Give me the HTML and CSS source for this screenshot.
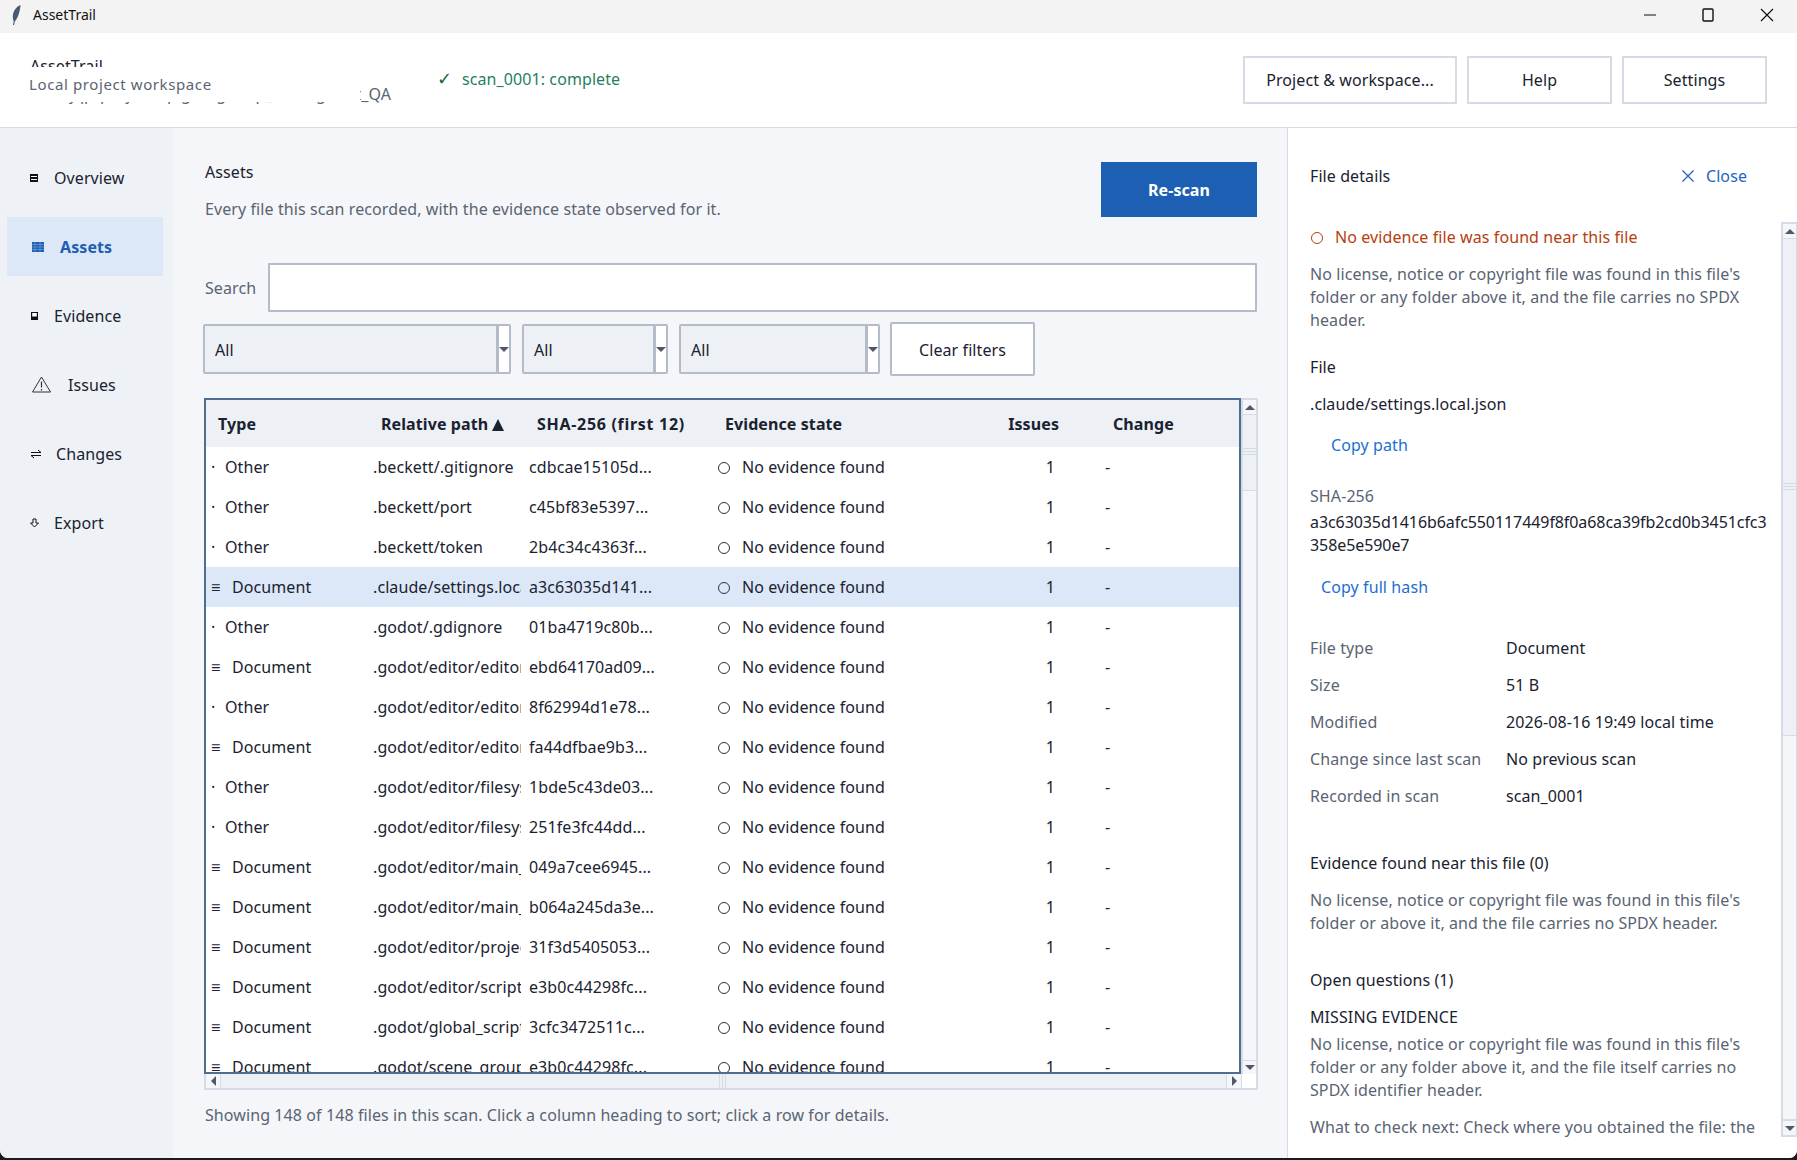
FILE: index.html
```html
<!DOCTYPE html>
<html lang="en">
<head>
    <meta charset="UTF-8">
    <meta name="viewport" content="width=device-width, initial-scale=1.0">
    <title>AssetTrail</title>
    <link rel="stylesheet" href="styles.css">
</head>
<body>
<div class="app">
    <!-- Title bar -->
    <div class="titlebar">
        <svg class="feather" width="14" height="22" viewBox="0 0 14 24"><path d="M12 1C7 3 3.500 8 3.500 14c0 2 .5 3.500 1 5l-.8 4h1.200l.8-4c3-3 5.500-10 6.300-18z" fill="#4a5a6e"/></svg>
        <span class="titlebar_name">AssetTrail</span>
        <div class="win_controls">
            <svg width="12" height="12" viewBox="0 0 12 12"><path d="M0 6h12" stroke="#111" stroke-width="1"/></svg>
            <svg width="12" height="14" viewBox="0 0 12 14"><rect x="1" y="1" width="10" height="12" rx="1" fill="none" stroke="#111" stroke-width="1.400"/></svg>
            <svg width="14" height="14" viewBox="0 0 14 14"><path d="M1 1l12 12M13 1L1 13" stroke="#111" stroke-width="1.200"/></svg>
        </div>
    </div>

    <!-- Header -->
    <header class="topbar">
        <div class="brand">
            <div class="brand_name">AssetTrail</div>
            <div class="brand_path">C:/Users/jqp/projects/pig/engine/p_tools/godot_QA</div>
            <div class="brand_cover">Local project workspace</div>
        </div>
        <div class="scan_status"><span class="scan_check">✓</span>scan_0001: complete</div>
        <div class="top_buttons">
            <button class="top_btn btn_project">Project &amp; workspace...</button>
            <button class="top_btn btn_small">Help</button>
            <button class="top_btn btn_small">Settings</button>
        </div>
    </header>

    <div class="columns">
        <!-- Sidebar -->
        <nav class="sidebar">
            <a class="nav_item">
                <svg class="nav_icon icon_overview" width="8" height="8" viewBox="0 0 8 8"><rect width="8" height="8" fill="#111"/><path d="M1 2.500h6M1 5.500h6" stroke="#fff" stroke-width="1"/></svg>
                Overview
            </a>
            <a class="nav_item active">
                <svg class="nav_icon icon_assets" width="12" height="10" viewBox="0 0 12 10"><rect width="12" height="10" fill="#1c5fb3"/><path d="M3 0v10M8 0v10M0 2.500h12M0 5h12M0 7.500h12" stroke="#7ea6dc" stroke-width=".6"/></svg>
                Assets
            </a>
            <a class="nav_item">
                <svg class="nav_icon icon_evidence" width="7" height="8" viewBox="0 0 7 8"><rect width="7" height="8" fill="#111"/><rect x="1.200" y="1" width="4.600" height="3.500" fill="#fff"/></svg>
                Evidence
            </a>
            <a class="nav_item">
                <svg class="nav_icon icon_issues" width="19" height="17" viewBox="0 0 19 17"><path d="M9.500 1L18.500 16H.5z" fill="none" stroke="#333" stroke-width="1"/><path d="M9.500 5.500v6M9.500 13v1.500" stroke="#333" stroke-width="1.200"/></svg>
                Issues
            </a>
            <a class="nav_item">
                <svg class="nav_icon icon_changes" width="12" height="10" viewBox="0 0 12 10"><path d="M1 3.500h10L8 1M11 6.500H1L4 9" fill="none" stroke="#111" stroke-width="1"/></svg>
                Changes
            </a>
            <a class="nav_item">
                <svg class="nav_icon icon_export" width="9" height="10" viewBox="0 0 9 10"><path d="M3 1h3v4h2.500L4.500 9 .5 5H3z" fill="none" stroke="#111" stroke-width="1"/></svg>
                Export
            </a>
        </nav>

        <!-- Main -->
        <main class="main">
            <div class="page_head">
                <div>
                    <div class="page_title">Assets</div>
                    <div class="page_sub">Every file this scan recorded, with the evidence state observed for it.</div>
                </div>
                <button class="rescan">Re-scan</button>
            </div>

            <div class="search_row">
                <label class="search_label">Search</label>
                <input class="search_input" type="text">
            </div>

            <div class="filter_row">
                <div class="combo combo_type"><span class="combo_value">All</span><span class="combo_arrow"><i class="tri_down"></i></span></div>
                <div class="combo combo_state"><span class="combo_value">All</span><span class="combo_arrow"><i class="tri_down"></i></span></div>
                <div class="combo combo_change"><span class="combo_value">All</span><span class="combo_arrow"><i class="tri_down"></i></span></div>
                <button class="clear_btn">Clear filters</button>
            </div>

            <div class="table_box">
                <div class="table_frame">
                    <table class="assets">
                        <colgroup>
                            <col class="col_type"><col class="col_path"><col class="col_hash"><col class="col_state"><col class="col_issues"><col class="col_change">
                        </colgroup>
                        <thead>
                            <tr><th class="th_type">Type</th><th class="th_path">Relative path<i class="sort_tri"></i></th><th class="th_hash">SHA-256 (first 12)</th><th class="th_state">Evidence state</th><th class="num">Issues</th><th>Change</th></tr>
                        </thead>
                        <tbody>
                            <tr><td><span class="kind">·</span>Other</td><td>.beckett/.gitignore</td><td>cdbcae15105d...</td><td><i class="dot"></i>No evidence found</td><td class="num">1</td><td>-</td></tr>
                            <tr><td><span class="kind">·</span>Other</td><td>.beckett/port</td><td>c45bf83e5397...</td><td><i class="dot"></i>No evidence found</td><td class="num">1</td><td>-</td></tr>
                            <tr><td><span class="kind">·</span>Other</td><td>.beckett/token</td><td>2b4c34c4363f...</td><td><i class="dot"></i>No evidence found</td><td class="num">1</td><td>-</td></tr>
                            <tr class="selected"><td><span class="kind doc">≡</span>Document</td><td>.claude/settings.local.json</td><td>a3c63035d141...</td><td><i class="dot"></i>No evidence found</td><td class="num">1</td><td>-</td></tr>
                            <tr><td><span class="kind">·</span>Other</td><td>.godot/.gdignore</td><td>01ba4719c80b...</td><td><i class="dot"></i>No evidence found</td><td class="num">1</td><td>-</td></tr>
                            <tr><td><span class="kind doc">≡</span>Document</td><td>.godot/editor/editor_layout.cfg</td><td>ebd64170ad09...</td><td><i class="dot"></i>No evidence found</td><td class="num">1</td><td>-</td></tr>
                            <tr><td><span class="kind">·</span>Other</td><td>.godot/editor/editor_doc_cache</td><td>8f62994d1e78...</td><td><i class="dot"></i>No evidence found</td><td class="num">1</td><td>-</td></tr>
                            <tr><td><span class="kind doc">≡</span>Document</td><td>.godot/editor/editor_state.cfg</td><td>fa44dfbae9b3...</td><td><i class="dot"></i>No evidence found</td><td class="num">1</td><td>-</td></tr>
                            <tr><td><span class="kind">·</span>Other</td><td>.godot/editor/filesystem_cache</td><td>1bde5c43de03...</td><td><i class="dot"></i>No evidence found</td><td class="num">1</td><td>-</td></tr>
                            <tr><td><span class="kind">·</span>Other</td><td>.godot/editor/filesystem_update</td><td>251fe3fc44dd...</td><td><i class="dot"></i>No evidence found</td><td class="num">1</td><td>-</td></tr>
                            <tr><td><span class="kind doc">≡</span>Document</td><td>.godot/editor/main_scene.cfg</td><td>049a7cee6945...</td><td><i class="dot"></i>No evidence found</td><td class="num">1</td><td>-</td></tr>
                            <tr><td><span class="kind doc">≡</span>Document</td><td>.godot/editor/main_script.cfg</td><td>b064a245da3e...</td><td><i class="dot"></i>No evidence found</td><td class="num">1</td><td>-</td></tr>
                            <tr><td><span class="kind doc">≡</span>Document</td><td>.godot/editor/project_metadata.cfg</td><td>31f3d5405053...</td><td><i class="dot"></i>No evidence found</td><td class="num">1</td><td>-</td></tr>
                            <tr><td><span class="kind doc">≡</span>Document</td><td>.godot/editor/script_editor_cache.cfg</td><td>e3b0c44298fc...</td><td><i class="dot"></i>No evidence found</td><td class="num">1</td><td>-</td></tr>
                            <tr><td><span class="kind doc">≡</span>Document</td><td>.godot/global_script_class_cache.cfg</td><td>3cfc3472511c...</td><td><i class="dot"></i>No evidence found</td><td class="num">1</td><td>-</td></tr>
                            <tr><td><span class="kind doc">≡</span>Document</td><td>.godot/scene_groups_cache.cfg</td><td>e3b0c44298fc...</td><td><i class="dot"></i>No evidence found</td><td class="num">1</td><td>-</td></tr>
                        </tbody>
                    </table>
                </div>
                <!-- Vertical scrollbar -->
                <div class="vbar">
                    <div class="bar_btn"><i class="tri_up"></i></div>
                    <div class="vthumb"><i class="grip"></i></div>
                    <div class="bar_track"></div>
                    <div class="bar_btn bar_btn_end"><i class="tri_down"></i></div>
                </div>
                <!-- Horizontal scrollbar -->
                <div class="hbar">
                    <div class="hbar_btn"><i class="tri_left"></i></div>
                    <div class="hthumb"><i class="hgrip"></i></div>
                    <div class="hbar_btn"><i class="tri_right"></i></div>
                </div>
                <div class="bar_corner"></div>
            </div>

            <p class="table_note">Showing 148 of 148 files in this scan. Click a column heading to sort; click a row for details.</p>
        </main>

        <!-- File details -->
        <aside class="details">
            <div class="details_head">
                <span>File details</span>
                <span class="close_link">
                    <svg width="12" height="12" viewBox="0 0 12 12"><path d="M.5.5l11 11M11.500.5l-11 11" stroke="#1c5fb3" stroke-width="1.200"/></svg>
                    Close
                </span>
            </div>
            <div class="details_body">
                <div class="details_scroll">
                    <div class="warn_line"><i class="dot dot_warn"></i>No evidence file was found near this file</div>
                    <p class="muted warn_text">No license, notice or copyright file was found in this file's<br>folder or any folder above it, and the file carries no SPDX<br>header.</p>
                    <div class="block_label file_label">File</div>
                    <div class="file_path">.claude/settings.local.json</div>
                    <div class="link copy_path">Copy path</div>
                    <div class="muted sha_label">SHA-256</div>
                    <div class="full_hash">a3c63035d1416b6afc550117449f8f0a68ca39fb2cd0b3451cfc3<br>358e5e590e7</div>
                    <div class="link copy_hash">Copy full hash</div>
                    <dl class="facts">
                        <dt>File type</dt><dd>Document</dd>
                        <dt>Size</dt><dd>51 B</dd>
                        <dt>Modified</dt><dd>2026-08-16 19:49 local time</dd>
                        <dt>Change since last scan</dt><dd>No previous scan</dd>
                        <dt>Recorded in scan</dt><dd>scan_0001</dd>
                    </dl>
                    <div class="block_label evidence_label">Evidence found near this file (0)</div>
                    <p class="muted evidence_text">No license, notice or copyright file was found in this file's<br>folder or above it, and the file carries no SPDX header.</p>
                    <div class="block_label questions_label">Open questions (1)</div>
                    <div class="question_kind">MISSING EVIDENCE</div>
                    <p class="muted question_text">No license, notice or copyright file was found in this file's<br>folder or any folder above it, and the file itself carries no<br>SPDX identifier header.</p>
                    <p class="muted next_text">What to check next: Check where you obtained the file: the</p>
                </div>
                <div class="vbar panel_bar">
                    <div class="bar_btn"><i class="tri_up"></i></div>
                    <div class="panel_thumb"><i class="grip"></i></div>
                    <div class="bar_track"></div>
                    <div class="bar_btn bar_btn_end"><i class="tri_down"></i></div>
                </div>
            </div>
        </aside>
    </div>
</div>
</body>
</html>
```

FILE: styles.css
```css
* {
    box-sizing: border-box;
}

html, body {
    margin: 0;
    padding: 0;
    height: 100%;
    overflow: hidden;
}

body {
    font-family: "Noto Sans", sans-serif;
    font-size: 16px;
    letter-spacing: 0.09px;
    color: #1a2230;
    background-color: #1b1b1b;
}

button {
    letter-spacing: inherit;
}

.app {
    width: 1797px;
    height: 1158px;
    display: flex;
    flex-direction: column;
    background-color: #ffffff;
    border-radius: 0 0 8px 8px;
    overflow: hidden;
}

/* Title bar */
.titlebar {
    height: 33px;
    flex: none;
    display: flex;
    align-items: center;
    padding: 0 0 4px 9px;
    background-color: #f3f3f3;
    font-size: 14px;
    letter-spacing: 0;
    color: #111111;
}

.titlebar_name {
    margin-left: 10px;
}

.win_controls {
    margin-left: auto;
    width: 153px;
    padding-right: 23px;
    display: flex;
    justify-content: space-between;
    align-items: center;
}

/* Header */
.topbar {
    height: 95px;
    flex: none;
    display: flex;
    align-items: center;
    padding: 0 30px 0 29px;
    border-bottom: 1px solid #d5dae4;
}

.brand {
    position: relative;
    width: 408px;
    height: 72px;
    overflow: hidden;
    flex: none;
}

.brand_name {
    position: absolute;
    top: 12px;
    left: 1px;
    line-height: 20px;
}

.brand_path {
    position: absolute;
    top: 39px;
    right: 46px;
    white-space: nowrap;
    color: #5a6472;
    line-height: 22px;
}

.brand_cover {
    position: absolute;
    top: 23px;
    left: 0;
    width: 331px;
    height: 35px;
    padding-top: 7px;
    background-color: #ffffff;
    color: #5a6472;
    font-size: 15px;
    letter-spacing: 0.6px;
    line-height: 20px;
}

.scan_status {
    color: #1f7f5f;
    line-height: 20px;
    margin-bottom: 2px;
}

.scan_check {
    display: inline-block;
    width: 25px;
    font-size: 18px;
    line-height: 1;
    color: #146b3a;
}

.top_buttons {
    margin-left: auto;
    display: flex;
    gap: 10px;
}

.top_btn {
    height: 48px;
    background-color: #ffffff;
    border: 2px solid #d5dae4;
    font: inherit;
    color: #1a2230;
    padding: 0;
}

.btn_project {
    width: 214px;
}

.btn_small {
    width: 145px;
}

.columns {
    flex: 1;
    display: flex;
    min-height: 0;
}

/* Sidebar */
.sidebar {
    width: 173px;
    flex: none;
    padding: 20px 10px 0 7px;
    background-color: #eef1f6;
    display: flex;
    flex-direction: column;
    gap: 10px;
}

.nav_item {
    height: 59px;
    display: flex;
    align-items: center;
    padding-left: 23px;
    color: #1a2230;
}

.nav_item.active {
    background-color: #dce7f7;
    color: #1c5fb3;
    font-weight: 700;
}

.nav_icon {
    flex: none;
}

.icon_overview {
    margin-right: 16px;
}

.icon_assets {
    margin-left: 2px;
    margin-right: 16px;
}

.icon_evidence {
    margin-left: 1px;
    margin-right: 16px;
}

.icon_issues {
    margin-left: 2px;
    margin-right: 17px;
}

.icon_changes {
    margin-right: 14px;
}

.icon_export {
    margin-right: 15px;
}

/* Main */
.main {
    flex: 1;
    min-width: 0;
    padding: 34px 30px 0 31px;
    background-color: #f4f6f9;
}

.page_head {
    display: flex;
    justify-content: space-between;
    height: 55px;
}

.page_title {
    margin: -1px 0 0 1px;
    line-height: 22px;
}

.page_sub {
    margin: 15px 0 0 1px;
    line-height: 22px;
    color: #5a6472;
}

.rescan {
    width: 156px;
    height: 55px;
    border: 0;
    background-color: #1c5fb3;
    color: #ffffff;
    font: inherit;
    font-weight: 700;
}

.search_row {
    display: flex;
    align-items: center;
    margin-top: 46px;
}

.search_label {
    width: 64px;
    padding-left: 1px;
    color: #5a6472;
}

.search_input {
    flex: 1;
    height: 49px;
    background-color: #ffffff;
    border: 2px solid #b4bcca;
    border-radius: 1px;
}

.filter_row {
    display: flex;
    align-items: center;
    gap: 11px;
    margin: 10px 0 0 -1px;
}

.combo {
    height: 50px;
    display: flex;
    border: 2px solid #b4bcca;
    border-radius: 2px;
    background-color: #edf0f5;
}

.combo_type {
    width: 308px;
}

.combo_state {
    width: 146px;
}

.combo_change {
    width: 201px;
}

.combo_value {
    flex: 1;
    padding-left: 10px;
    line-height: 48px;
    border-right: 3px solid #b4bcca;
}

.combo_arrow {
    width: 10px;
    background-color: #ffffff;
    display: flex;
    align-items: center;
    justify-content: center;
}

.clear_btn {
    width: 145px;
    height: 54px;
    margin-left: -1px;
    background-color: #ffffff;
    border: 2px solid #b4bcca;
    border-radius: 2px;
    font: inherit;
    color: #1a2230;
    padding: 2px 0 0;
}

/* Table */
.table_box {
    display: grid;
    grid-template-columns: 1037px 17px;
    grid-template-rows: 676px 16px;
    margin-top: 22px;
    width: 1054px;
    height: 692px;
}

.table_frame {
    overflow: hidden;
    background-color: #ffffff;
    border: 2px solid #4f6d8f;
}

.assets {
    width: 1033px;
    table-layout: fixed;
    border-collapse: collapse;
}

.col_type {
    width: 157px;
}

.col_path {
    width: 158px;
}

.col_hash {
    width: 189px;
}

.col_state {
    width: 270px;
}

.col_issues {
    width: 117px;
}

.assets th {
    height: 47px;
    padding: 0 0 0 16px;
    text-align: left;
    font-weight: 700;
    background-color: #edf0f5;
    white-space: nowrap;
    overflow: hidden;
}

.assets th.th_type {
    padding-left: 12px;
}

.assets th.th_path {
    padding-left: 18px;
}

.assets th.th_hash {
    letter-spacing: 0.7px;
}

.assets th.th_state {
    padding-left: 15px;
}

.sort_tri {
    display: inline-block;
    margin-left: 4px;
    border: solid transparent;
    border-width: 0 6.500px 12px;
    border-bottom-color: #1a2230;
    vertical-align: -1px;
}

.assets td {
    height: 40px;
    padding: 0 0 0 8px;
    white-space: nowrap;
    overflow: hidden;
}

.assets td:first-child {
    padding-left: 5px;
}

.assets td:nth-child(2) {
    padding-left: 10px;
}

.assets th.num {
    padding: 0 38px 0 0;
    text-align: right;
}

.assets td.num {
    padding: 0 42px 0 0;
    text-align: right;
}

.selected td {
    background-color: #dce7f7;
}

.kind {
    display: inline-block;
    width: 14px;
}

.kind.doc {
    width: 21px;
}

.dot {
    display: inline-block;
    width: 12px;
    height: 12px;
    margin-right: 12px;
    border: 1.500px solid #2a3240;
    border-radius: 50%;
    vertical-align: -1px;
}

/* Scrollbars */
.vbar {
    display: flex;
    flex-direction: column;
    border: solid #d5dce6;
    border-width: 2px 2px 0 2px;
    background-color: #f4f6f9;
}

.bar_btn {
    height: 14px;
    flex: none;
    display: flex;
    align-items: center;
    justify-content: center;
    background-color: #f4f6f9;
}

.bar_btn_end {
    border-top: 1px solid #d5dce6;
}

.vthumb {
    height: 77px;
    flex: none;
    background-color: #edf0f5;
    border: solid #d5dce6;
    border-width: 1px 0;
    display: flex;
    align-items: center;
    justify-content: center;
}

.bar_track {
    flex: 1;
}

.grip {
    display: block;
    width: 100%;
    height: 9px;
    background: repeating-linear-gradient(#d5dce6 0 1px, transparent 1px 3px);
}

.hbar {
    display: flex;
    background-color: #edf0f5;
    border: solid #d5dce6;
    border-width: 0 0 2px 2px;
}

.hbar_btn {
    width: 14px;
    flex: none;
    display: flex;
    align-items: center;
    justify-content: center;
    background-color: #f4f6f9;
}

.hthumb {
    flex: 1;
    display: flex;
    justify-content: center;
    border: solid #d5dce6;
    border-width: 0 1px;
}

.hgrip {
    display: block;
    width: 9px;
    background: repeating-linear-gradient(90deg, #d5dce6 0 1px, transparent 1px 3px);
}

.bar_corner {
    background-color: #ffffff;
    border: solid #d5dce6;
    border-width: 0 2px 2px 1px;
}

.tri_up, .tri_down, .tri_left, .tri_right {
    display: block;
    width: 0;
    height: 0;
    border: 5px solid transparent;
}

.tri_up {
    border-bottom-color: #4f5868;
    border-top-width: 0;
}

.tri_down {
    border-top-color: #4f5868;
    border-bottom-width: 0;
}

.tri_left {
    border-right-color: #4f5868;
    border-left-width: 0;
}

.tri_right {
    border-left-color: #4f5868;
    border-right-width: 0;
}

.table_note {
    margin: 14px 0 0 1px;
    line-height: 22px;
    color: #5a6472;
}

/* File details */
.details {
    width: 510px;
    flex: none;
    display: flex;
    flex-direction: column;
    background-color: #ffffff;
    border-left: 1px solid #d5dae4;
}

.details_head {
    height: 94px;
    flex: none;
    display: flex;
    justify-content: space-between;
    align-items: flex-start;
    padding: 37px 50px 0 22px;
    line-height: 22px;
}

.close_link {
    display: flex;
    align-items: center;
    gap: 12px;
    color: #1f66bd;
}

.details_body {
    display: flex;
    height: 915px;
}

.details_scroll {
    flex: 1;
    min-width: 0;
    padding: 4px 0 0 22px;
    overflow: hidden;
    line-height: 23px;
}

.muted {
    color: #5a6472;
}

.details_scroll p {
    margin: 0;
}

.warn_line {
    color: #b5400e;
    line-height: 22px;
}

.dot_warn {
    margin-left: 1px;
    border-color: #b5400e;
}

.details_scroll .warn_text {
    margin-top: 15px;
}

.block_label {
    line-height: 22px;
}

.link {
    color: #1c6fd0;
    line-height: 22px;
}

.file_label {
    margin-top: 24px;
}

.file_path {
    margin-top: 15px;
    line-height: 22px;
}

.copy_path {
    margin: 19px 0 0 21px;
}

.sha_label {
    margin-top: 29px;
    line-height: 22px;
}

.full_hash {
    margin-top: 4px;
    line-height: 23px;
    letter-spacing: -0.08px;
    white-space: nowrap;
}

.copy_hash {
    margin: 19px 0 0 11px;
}

.facts {
    display: grid;
    grid-template-columns: 196px 1fr;
    grid-auto-rows: 37px;
    align-items: center;
    margin: 32px 0 0;
}

.facts dt {
    color: #5a6472;
}

.facts dd {
    margin: 0;
}

.evidence_label {
    margin-top: 37px;
}

.details_scroll .evidence_text {
    margin-top: 15px;
}

.questions_label {
    margin-top: 34px;
}

.question_kind {
    margin-top: 15px;
    line-height: 22px;
}

.details_scroll .question_text {
    margin-top: 5px;
}

.details_scroll .next_text {
    margin-top: 14px;
    white-space: nowrap;
}

.panel_bar {
    width: 16px;
    flex: none;
    border-width: 0 1px 0 2px;
    border-bottom: 2px solid #d5dce6;
}

.panel_bar .bar_btn {
    height: 16px;
    border-top: 2px solid #d5dce6;
}

.panel_thumb {
    height: 498px;
    flex: none;
    background-color: #edf0f5;
    border: solid #d5dce6;
    border-width: 1px 0;
    display: flex;
    align-items: center;
}
```
